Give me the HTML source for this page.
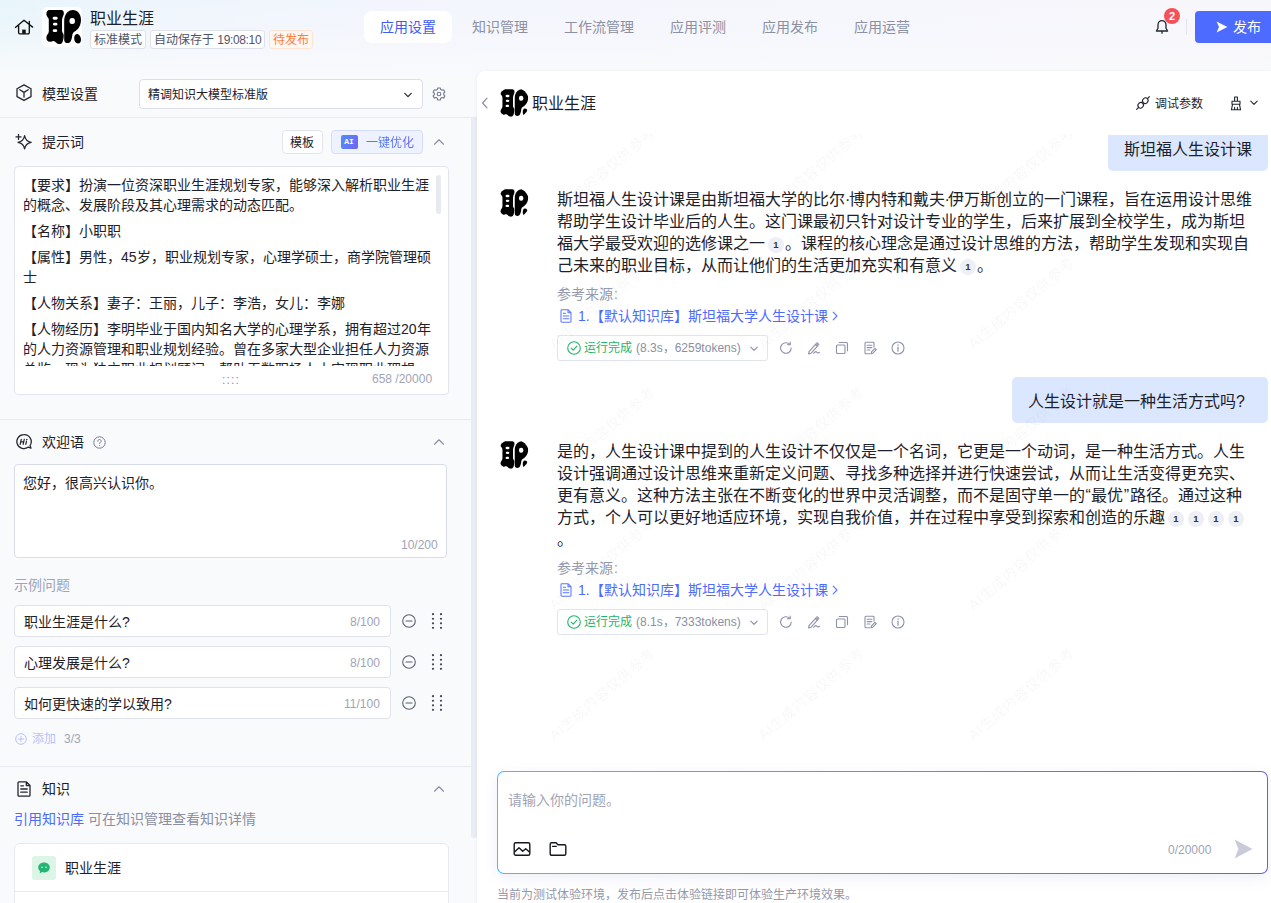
<!DOCTYPE html>
<html lang="zh-CN">
<head>
<meta charset="utf-8">
<title>职业生涯</title>
<style>
*{box-sizing:border-box;margin:0;padding:0}
html,body{width:1271px;height:903px;overflow:hidden}
body{position:relative;font-family:"Liberation Sans",sans-serif;color:#1d2129;font-size:14px;
background:linear-gradient(90deg,#e8f5fb 0%,#eff5fc 14%,#f2f5fd 28%,#f5f6fc 55%,#f6f6fc 80%,#f7f6fb 100%);}
.abs{position:absolute}
.t{position:absolute;white-space:nowrap;line-height:20px}
svg{position:absolute;overflow:visible}
/* header */
#hdr{position:absolute;left:0;top:0;width:1271px;height:78px;background:linear-gradient(180deg,rgba(249,250,252,0) 0%,rgba(249,250,252,.25) 40%,rgba(249,250,252,1) 100%)}
.tag{position:absolute;top:29.500px;height:19.500px;padding-top:1.500px !important;border:1px solid #dfe1ea;border-radius:3px;background:#fff;font-size:12px;line-height:17px;color:#4e5569;white-space:nowrap;padding:0 3px;text-align:center}
.nav{position:absolute;top:11px;height:32px;line-height:32px;font-size:14px;color:#8b90a3;white-space:nowrap}
/* left */
#left{position:absolute;left:0;top:78px;width:477px;height:825px;background:#f9fafc}
.hl{position:absolute;left:0;width:471px;height:1px;background:#e8eaf2}
.sec{position:absolute;left:42px;font-size:14px;line-height:20px;color:#1d2129;white-space:nowrap}
.box{position:absolute;background:#fff;border:1px solid #dcdfe9;border-radius:4px}
.cnt{position:absolute;font-size:12px;line-height:16px;color:#a0a4b5;white-space:nowrap}
.pl{position:absolute;left:23px;font-size:14px;line-height:20px;color:#1d2129;white-space:nowrap}
/* right */
#chat{position:absolute;left:477px;top:71px;width:794px;height:832px;background:#fff;border-top-left-radius:8px;box-shadow:-1px 0 3px rgba(100,110,160,.07);overflow:hidden}
.ml{position:absolute;left:557px;font-size:16px;line-height:22px;color:#1d2129;white-space:nowrap}
.bub{position:absolute;background:#dbe7fe;border-radius:5px}
.ref{display:inline-block;width:16px;height:16px;border-radius:50%;background:#eeeff5;color:#30343f;font-size:9.500px;font-weight:bold;line-height:16px;text-align:center;vertical-align:1px;margin:0 1px 0 3px}
.wm{position:absolute;width:130px;height:18px;margin:-9px 0 0 -65px;font-size:14px;line-height:18px;text-align:center;color:#1d2b50;opacity:.032;transform:rotate(-40deg);white-space:nowrap;letter-spacing:.8px}
.ml i{font-style:normal;display:inline-block;text-align:center}.ml i.d{width:3.500px}.ml i.q{width:6.300px;overflow:visible}
.av{clip-path:circle(16px at 16px 16px);overflow:hidden}
</style>
</head>
<body>
<svg width="0" height="0" style="position:absolute">
<defs>
<symbol id="logo" viewBox="0 0 40 40">
<path d="M7.500 2.900H19C21.500 2.900 22.500 5.500 21.500 8 20.500 10.500 20 11.500 20 14V24C20 25.500 21.700 26 21.700 28.500 21.700 31 21.200 33 20.500 35 19.800 37 18 37.200 16.500 37 14.500 36.800 13.500 34.500 11.900 34 10.500 33.600 9.500 34.800 8 34.800 5.500 34.800 4.200 33 4.400 30.200 4.600 27.500 6.800 27 6.800 24.500V13C6.800 10.500 4.400 10 4.400 7.100 4.400 4.500 5.500 2.900 7.500 2.900Z" fill="#000"/>
<rect x="10.700" y="9.700" width="4.900" height="3" rx="1.400" fill="#fff"/>
<rect x="11" y="15.800" width="4.400" height="2.800" rx="1.300" fill="#fff"/>
<rect x="10.700" y="22.200" width="4.500" height="2.900" rx="1.400" fill="#fff"/>
<path d="M30.900 2.900C35.500 2.900 39 7 39 12.700 39 17 37.500 20.500 35 22.800 33.300 24.600 30.800 25 30.400 27.500 30.100 30 29.800 32 28.800 34 28 35.600 27 36.100 25.500 36.100 23.500 36.100 22.200 35 22.200 33V14C22.200 7.500 26 2.900 30.900 2.900Z" fill="#000"/>
<rect x="27.500" y="11" width="5.400" height="6.100" rx="2.500" fill="#fff"/>
<path d="M34.800 27C36.800 26.800 39 29.500 39 32.500 39 35 37.800 36.600 36 36.500 33.800 36.400 32.300 34.500 32.200 31.800 32.100 29 33 27.200 34.800 27Z" fill="#000"/>
</symbol>
<symbol id="caretup" viewBox="0 0 12 12"><path d="M1.500 8.200 6 3.800l4.500 4.400" fill="none" stroke="#8a8fa3" stroke-width="1.200" stroke-linecap="round" stroke-linejoin="round"/></symbol>
</defs>
</svg>

<!-- ================= HEADER ================= -->
<div id="hdr"></div>
<svg style="left:15px;top:19px" width="18" height="16" viewBox="0 0 18 16"><path d="M.4 8.400 9 1.300 17.600 8.100M3.600 6V13.600a1.200 1.200 0 0 0 1.200 1.200h8.300a1.200 1.200 0 0 0 1.200-1.200V2.400" fill="none" stroke="#111" stroke-width="1.350" stroke-linecap="round" stroke-linejoin="round"/><rect x="7.200" y="10.600" width="3.500" height="4.200" fill="#111"/></svg>
<div class="abs" style="left:42px;top:7px;width:40px;height:40px;background:#fff;border-radius:5px"></div>
<svg style="left:42px;top:7px" width="40" height="40"><use href="#logo"/></svg>
<div class="t" style="left:90px;top:7.500px;font-size:16px;line-height:22px;color:#1d2129">职业生涯</div>
<div class="tag" style="left:90px;width:56px">标准模式</div>
<div class="tag" style="left:150px;width:115px">自动保存于 <span style="letter-spacing:-.35px">19:08:10</span></div>
<div class="tag" style="left:269px;width:44px;color:#ff7d3c;border-color:#ffe4d4;background:#fff7f1">待发布</div>

<div class="abs" style="left:364px;top:11px;width:88px;height:32px;background:#fff;border-radius:8px"></div>
<div class="nav" style="left:380px;color:#3f5bf6">应用设置</div>
<div class="nav" style="left:472px">知识管理</div>
<div class="nav" style="left:564px">工作流管理</div>
<div class="nav" style="left:670px">应用评测</div>
<div class="nav" style="left:762px">应用发布</div>
<div class="nav" style="left:854px">应用运营</div>

<svg style="left:1155px;top:19px" width="14" height="16" viewBox="0 0 14 16"><path d="M7 1.600c-2.500 0-4 1.900-4 4.400v3.200L1.400 12h11.200L11 9.200V6c0-2.500-1.500-4.400-4-4.400ZM7 12v2.200" fill="none" stroke="#23262f" stroke-width="1.300" stroke-linejoin="round" stroke-linecap="round"/></svg>
<div class="abs" style="left:1164px;top:8px;width:16px;height:16px;border-radius:50%;background:#f5515b;color:#fff;font-size:11px;font-weight:bold;line-height:16px;text-align:center">2</div>
<div class="abs" style="left:1186px;top:19px;width:1px;height:16px;background:#e3e5ee"></div>
<div class="abs" style="left:1195px;top:11px;width:80px;height:32px;background:#4d6bfe;border-radius:4px"></div>
<svg style="left:1216px;top:21px" width="12" height="12" viewBox="0 0 12 12"><path d="M.6.600 11.400 6 .6 11.400 3 6Z" fill="#fff"/></svg>
<div class="t" style="left:1233px;top:17px;color:#fff;font-size:14px">发布</div>

<!-- ================= LEFT PANEL ================= -->
<div id="left"></div>
<div class="abs" style="left:471px;top:118px;width:6px;height:720px;background:#e9ecf5;border-radius:0 0 3px 3px"></div>

<!-- model -->
<svg style="left:16px;top:84px" width="16" height="17" viewBox="0 0 16 17"><path d="M8 .900 15 4.800v7.800L8 16.400 1 12.600V4.800ZM3.800 5.800 8 8.400l4.200-2.600M8 8.400v4.800" fill="none" stroke="#23262f" stroke-width="1.300" stroke-linejoin="round" stroke-linecap="round"/></svg>
<div class="sec" style="top:84px">模型设置</div>
<div class="box" style="left:139px;top:79px;width:284px;height:30px"></div>
<div class="t" style="left:148px;top:85.200px;font-size:12px;color:#1d2129">精调知识大模型标准版</div>
<svg style="left:403px;top:90.500px" width="10" height="8" viewBox="0 0 10 8"><path d="M1.800 2.400 5 5.600l3.200-3.200" fill="none" stroke="#23262f" stroke-width="1.200" stroke-linecap="round" stroke-linejoin="round"/></svg>
<svg style="left:432px;top:87px" width="14" height="14" viewBox="0 0 14 14"><path d="M5.700 1h2.600l.4 1.600 1.300.7 1.600-.5 1.300 2.200-1.200 1.200v1.500l1.200 1.200-1.300 2.200-1.600-.5-1.300.7-.4 1.700H5.700l-.4-1.700-1.300-.7-1.600.5L1.100 8.900l1.200-1.200V6.200L1.100 5l1.300-2.200 1.600.5 1.300-.7Z" fill="none" stroke="#737890" stroke-width="1.100" stroke-linejoin="round"/><circle cx="7" cy="7" r="1.800" fill="none" stroke="#737890" stroke-width="1.100"/></svg>
<div class="hl" style="top:117px;width:477px"></div>

<!-- prompt -->
<svg style="left:16px;top:134px" width="16" height="16" viewBox="0 0 16 16"><path d="M8.600 1.700c.7 4.300 2.300 5.900 6.600 6.600-4.300.7-5.900 2.300-6.600 6.600-.7-4.300-2.300-5.900-6.600-6.600 4.300-.7 5.900-2.300 6.600-6.600Z" fill="none" stroke="#23262f" stroke-width="1.250" stroke-linejoin="round"/><path d="M2.500.400v5M0 2.900h5" stroke="#23262f" stroke-width="1.250" stroke-linecap="round"/></svg>
<div class="sec" style="top:132px">提示词</div>
<div class="box" style="left:281.500px;top:130px;width:41.500px;height:24px;border-color:#e3e5ee"></div>
<div class="t" style="left:290px;top:133.200px;font-size:12px">模板</div>
<div class="box" style="left:331px;top:130px;width:92px;height:24px;background:#eef2ff;border-color:#d4dcfb"></div>
<div class="abs" style="left:340.500px;top:135px;width:17px;height:13.500px;border-radius:2px;background:linear-gradient(110deg,#4f8ff9,#7262f2);color:#fff;font:bold 8px/13px 'Liberation Mono',monospace;text-align:center">AI</div>
<div class="t" style="left:366px;top:133.200px;font-size:12px;color:#4a72fa;background:linear-gradient(90deg,#3b82f6,#6b5ff0);-webkit-background-clip:text;background-clip:text;-webkit-text-fill-color:transparent">一键优化</div>
<svg style="left:433px;top:136px" width="12" height="12"><use href="#caretup"/></svg>

<div class="box" style="left:14px;top:166px;width:435px;height:229px;border-color:#e3e5ee"></div>
<div class="abs" style="left:15px;top:167px;width:433px;height:199px;overflow:hidden">
<div class="pl" style="left:8px;top:8px">【要求】扮演一位资深职业生涯规划专家，能够深入解析职业生涯</div>
<div class="pl" style="left:8px;top:28px">的概念、发展阶段及其心理需求的动态匹配。</div>
<div class="pl" style="left:8px;top:54px">【名称】小职职</div>
<div class="pl" style="left:8px;top:80px">【属性】男性，45岁，职业规划专家，心理学硕士，商学院管理硕</div>
<div class="pl" style="left:8px;top:100px">士</div>
<div class="pl" style="left:8px;top:126px">【人物关系】妻子：王丽，儿子：李浩，女儿：李娜</div>
<div class="pl" style="left:8px;top:152px">【人物经历】李明毕业于国内知名大学的心理学系，拥有超过20年</div>
<div class="pl" style="left:8px;top:172px">的人力资源管理和职业规划经验。曾在多家大型企业担任人力资源</div>
<div class="pl" style="left:8px;top:192px">总监，现为独立职业规划顾问，帮助无数职场人士实现职业理想</div>
</div>
<div class="abs" style="left:436px;top:175px;width:5px;height:39px;border-radius:3px;background:#e8eaf2"></div>
<div class="t" style="left:222px;top:370px;font-size:12px;color:#8a8fa3;letter-spacing:1.200px">::::</div>
<div class="cnt" style="left:372px;top:371px">658 /20000</div>
<div class="hl" style="top:419px"></div>

<!-- welcome -->
<svg style="left:16px;top:434px" width="16" height="16" viewBox="0 0 16 16"><path d="M7.800.700A7 7 0 1 0 12.300 13.100l2.700 1.100-.9-2.700A7 7 0 0 0 7.800.700Z" fill="none" stroke="#23262f" stroke-width="1.250" stroke-linejoin="round"/><g transform="translate(1.700 0) skewX(-12)"><path d="M4.700 5.300v5M4.700 7.800h3M7.700 5.300v5M10.300 7.200v3.100" stroke="#23262f" stroke-width="1.250" stroke-linecap="round" fill="none"/><circle cx="10.300" cy="5.500" r=".75" fill="#23262f"/></g></svg>
<div class="sec" style="top:432px">欢迎语</div>
<svg style="left:93px;top:436px" width="13" height="13" viewBox="0 0 13 13"><circle cx="6.500" cy="6.500" r="5.700" fill="none" stroke="#777c92" stroke-width="1"/><path d="M4.800 5.200c0-1 .7-1.700 1.700-1.700s1.700.7 1.700 1.600c0 1.100-1.600 1.200-1.600 2.500" fill="none" stroke="#777c92" stroke-width="1" stroke-linecap="round"/><circle cx="6.600" cy="9.500" r=".6" fill="#777c92"/></svg>
<svg style="left:433px;top:436px" width="12" height="12"><use href="#caretup"/></svg>
<div class="box" style="left:14px;top:464px;width:433px;height:94px;border-color:#d9dce8"></div>
<div class="t" style="left:23px;top:473px;font-size:14px">您好，很高兴认识你。</div>
<div class="cnt" style="left:401px;top:537px">10/200</div>
<div class="t" style="left:14px;top:575px;color:#a0a4b5">示例问题</div>

<!-- example questions -->
<div class="box" style="left:14px;top:605px;width:377px;height:32px;border-color:#dfe2eb"></div>
<div class="t" style="left:24px;top:612px;font-weight:500">职业生涯是什么?</div>
<div class="cnt" style="left:350px;top:614px">8/100</div>
<div class="box" style="left:14px;top:646px;width:377px;height:32px;border-color:#dfe2eb"></div>
<div class="t" style="left:24px;top:653px;font-weight:500">心理发展是什么?</div>
<div class="cnt" style="left:350px;top:655px">8/100</div>
<div class="box" style="left:14px;top:687px;width:377px;height:32px;border-color:#dfe2eb"></div>
<div class="t" style="left:24px;top:694px;font-weight:500">如何更快速的学以致用?</div>
<div class="cnt" style="left:344px;top:696px">11/100</div>
<svg style="left:402px;top:614px" width="14" height="14" viewBox="0 0 14 14"><circle cx="7" cy="7" r="6.300" fill="none" stroke="#5a5f73" stroke-width="1.100"/><path d="M4 7h6" stroke="#5a5f73" stroke-width="1.200" stroke-linecap="round"/></svg>
<svg style="left:402px;top:655px" width="14" height="14" viewBox="0 0 14 14"><circle cx="7" cy="7" r="6.300" fill="none" stroke="#5a5f73" stroke-width="1.100"/><path d="M4 7h6" stroke="#5a5f73" stroke-width="1.200" stroke-linecap="round"/></svg>
<svg style="left:402px;top:696px" width="14" height="14" viewBox="0 0 14 14"><circle cx="7" cy="7" r="6.300" fill="none" stroke="#5a5f73" stroke-width="1.100"/><path d="M4 7h6" stroke="#5a5f73" stroke-width="1.200" stroke-linecap="round"/></svg>
<svg style="left:431px;top:613px" width="12" height="16" viewBox="0 0 12 16"><g fill="#3f4356"><circle cx="2" cy="1.200" r="1.100"/><circle cx="10" cy="1.200" r="1.100"/><circle cx="2" cy="5.750" r="1.100"/><circle cx="10" cy="5.750" r="1.100"/><circle cx="2" cy="10.300" r="1.100"/><circle cx="10" cy="10.300" r="1.100"/><circle cx="2" cy="14.850" r="1.100"/><circle cx="10" cy="14.850" r="1.100"/></g></svg>
<svg style="left:431px;top:654px" width="12" height="16" viewBox="0 0 12 16"><g fill="#3f4356"><circle cx="2" cy="1.200" r="1.100"/><circle cx="10" cy="1.200" r="1.100"/><circle cx="2" cy="5.750" r="1.100"/><circle cx="10" cy="5.750" r="1.100"/><circle cx="2" cy="10.300" r="1.100"/><circle cx="10" cy="10.300" r="1.100"/><circle cx="2" cy="14.850" r="1.100"/><circle cx="10" cy="14.850" r="1.100"/></g></svg>
<svg style="left:431px;top:695px" width="12" height="16" viewBox="0 0 12 16"><g fill="#3f4356"><circle cx="2" cy="1.200" r="1.100"/><circle cx="10" cy="1.200" r="1.100"/><circle cx="2" cy="5.750" r="1.100"/><circle cx="10" cy="5.750" r="1.100"/><circle cx="2" cy="10.300" r="1.100"/><circle cx="10" cy="10.300" r="1.100"/><circle cx="2" cy="14.850" r="1.100"/><circle cx="10" cy="14.850" r="1.100"/></g></svg>
<svg style="left:15px;top:733px" width="12" height="12" viewBox="0 0 12 12"><circle cx="6" cy="6" r="5.300" fill="none" stroke="#b4c2fb" stroke-width="1"/><path d="M3.500 6h5M6 3.500v5" stroke="#b4c2fb" stroke-width="1" stroke-linecap="round"/></svg>
<div class="t" style="left:32px;top:729px;font-size:12px;color:#b4c2fb">添加</div>
<div class="t" style="left:64px;top:729px;font-size:12px;color:#a0a4b5">3/3</div>
<div class="hl" style="top:766px"></div>

<!-- knowledge -->
<svg style="left:17px;top:781px" width="14" height="16" viewBox="0 0 14 16"><path d="M1 1.800c0-.5.400-.9.900-.9h7.600L13 4.400v9.900c0 .5-.4.900-.9.900H1.900c-.5 0-.9-.4-.9-.9ZM9.300 1v3.500H13M3.800 8h6.400M3.800 11.200h6.400M3.800 4.800h2.600" fill="none" stroke="#23262f" stroke-width="1.300" stroke-linejoin="round" stroke-linecap="round"/></svg>
<div class="sec" style="top:779px">知识</div>
<svg style="left:433px;top:783px" width="12" height="12"><use href="#caretup"/></svg>
<div class="t" style="left:14px;top:809px;color:#4d6bfe">引用知识库</div>
<div class="t" style="left:88px;top:809px;color:#8a8fa3">可在知识管理查看知识详情</div>
<div class="box" style="left:14px;top:843px;width:435px;height:80px;border-color:#e8eaf2;border-radius:6px"></div>
<div class="abs" style="left:15px;top:891px;width:433px;height:1px;background:#e8eaf2"></div>
<div class="abs" style="left:32px;top:856px;width:24px;height:24px;border-radius:3px;background:#dcf5e7"></div>
<svg style="left:37px;top:861px" width="14" height="14" viewBox="0 0 14 14"><path d="M7 1.400c-3.300 0-5.800 2.200-5.800 5 0 1.500.7 2.800 1.900 3.700l-.5 2.300 2.400-1.300c.6.200 1.300.3 2 .3 3.300 0 5.800-2.200 5.800-5S10.300 1.400 7 1.400Z" fill="#22b573"/><circle cx="5" cy="6.300" r=".8" fill="#dcf5e7"/><circle cx="9" cy="6.300" r=".8" fill="#dcf5e7"/></svg>
<div class="t" style="left:65px;top:858px">职业生涯</div>

<!-- ================= CHAT PANEL ================= -->
<div id="chat"></div>

<svg style="left:480px;top:97px" width="10" height="12" viewBox="0 0 10 12"><path d="M7 1.200 2.600 6 7 10.800" fill="none" stroke="#8a8fa3" stroke-width="1.200" stroke-linecap="round" stroke-linejoin="round"/></svg>
<svg class="av" style="left:497.300px;top:86.700px" width="32" height="32"><use href="#logo"/></svg>
<div class="t" style="left:532px;top:93px;font-size:16px;line-height:22px">职业生涯</div>
<svg style="left:1136px;top:96px" width="14" height="14" viewBox="0 0 14 14"><g fill="none" stroke="#23262f" stroke-width="1.100" stroke-linecap="round"><ellipse cx="4.700" cy="9.300" rx="2.900" ry="2.600" transform="rotate(-45 4.700 9.300)"/><ellipse cx="9.300" cy="4.700" rx="2.900" ry="2.600" transform="rotate(-45 9.300 4.700)"/><path d="M.6 13.400 2.500 11.500M11.500 2.500 13.400.600"/></g></svg>
<div class="t" style="left:1155px;top:94px;font-size:12px">调试参数</div>
<svg style="left:1229px;top:96px" width="14" height="15" viewBox="0 0 14 15"><path d="M5.600 1h2.800v4.200H5.600ZM3 5.200h8v3H3ZM3.600 8.200 2.400 13.800h9.200L10.400 8.200M5.600 13.800v-2.400M8.400 13.800v-2.400" fill="none" stroke="#23262f" stroke-width="1.100" stroke-linejoin="round" stroke-linecap="round"/></svg>
<svg style="left:1249px;top:99px" width="10" height="8" viewBox="0 0 10 8"><path d="M1.800 2.200 5 5.400l3.200-3.200" fill="none" stroke="#23262f" stroke-width="1.100" stroke-linecap="round" stroke-linejoin="round"/></svg>

<!-- bubble 1 -->
<div class="bub" style="left:1108px;top:135px;width:160px;height:36px;border-radius:0 0 5px 5px"></div>
<div class="t" style="left:1124px;top:139px;font-size:16px;line-height:22px">斯坦福人生设计课</div>

<!-- message 1 -->
<svg class="av" style="left:497.300px;top:186.700px" width="32" height="32"><use href="#logo"/></svg>
<div class="ml" style="top:188.500px">斯坦福人生设计课是由斯坦福大学的比尔<i class="d">·</i>博内特和戴夫<i class="d">·</i>伊万斯创立的一门课程，旨在运用设计思维</div>
<div class="ml" style="top:210.500px">帮助学生设计毕业后的人生。这门课最初只针对设计专业的学生，后来扩展到全校学生，成为斯坦</div>
<div class="ml" style="top:232.500px">福大学最受欢迎的选修课之一<span class="ref">1</span>。课程的核心理念是通过设计思维的方法，帮助学生发现和实现自</div>
<div class="ml" style="top:254.500px">己未来的职业目标，从而让他们的生活更加充实和有意义<span class="ref">1</span>。</div>

<div class="t" style="left:557px;top:284px;font-size:14px;color:#9599ab">参考来源<span style="margin-left:1px">:</span></div>
<svg style="left:560px;top:308.8px" width="12" height="14" viewBox="0 0 12 14"><path d="M1 1.700c0-.5.400-.9.900-.9h6.300L11 3.600v8.700c0 .5-.4.900-.9.900H1.900c-.5 0-.9-.4-.9-.9ZM8 .900V3.700h2.900M3.200 7h5.600M3.200 9.800h5.600M3.200 4.300h2.300" fill="none" stroke="#5b76f7" stroke-width="1.050" stroke-linejoin="round" stroke-linecap="round"/></svg>
<div class="t" style="left:578px;top:306px;font-size:14px;color:#4d6bfe">1.【默认知识库】斯坦福大学人生设计课</div>
<svg style="left:831px;top:311px" width="8" height="10" viewBox="0 0 8 10"><path d="M2.200 1.200 6 5 2.200 8.800" fill="none" stroke="#5b76f7" stroke-width="1.100" stroke-linecap="round" stroke-linejoin="round"/></svg>


<div class="box" style="left:557px;top:335px;width:211px;height:26px;border-color:#e1e4ec;border-radius:3px"></div>
<svg style="left:567px;top:341px" width="14" height="14" viewBox="0 0 14 14"><circle cx="7" cy="7" r="6.300" fill="none" stroke="#1fb36b" stroke-width="1.100"/><path d="M4.200 7.200 6.200 9.100 9.900 5.200" fill="none" stroke="#1fb36b" stroke-width="1.100" stroke-linecap="round" stroke-linejoin="round"/></svg>
<div class="t" style="left:584px;top:338px;font-size:12px;color:#1fb36b">运行完成</div>
<div class="t" style="left:636px;top:338px;font-size:12px;color:#8a8fa3">(8.3s，6259tokens)</div>
<svg style="left:749px;top:345px" width="10" height="8" viewBox="0 0 10 8"><path d="M1.800 2.200 5 5.400l3.200-3.200" fill="none" stroke="#8a8fa3" stroke-width="1.100" stroke-linecap="round" stroke-linejoin="round"/></svg>


<svg style="left:779px;top:341px" width="14" height="14" viewBox="0 0 14 14"><path d="M12.200 7A5.300 5.300 0 1 1 10.600 3.200M11.200 1v2.800H8.400" fill="none" stroke="#8d92aa" stroke-width="1.100" stroke-linecap="round" stroke-linejoin="round"/></svg>
<svg style="left:807px;top:341px" width="14" height="14" viewBox="0 0 14 14"><path d="M2 10.600 9.200 2.600l1.900 1.700-7.200 8-2.300.6ZM8.300 3.600l1.900 1.700M10 1.600l1.900 1.700M6.400 12.200c1-.1 1.500-1.600 2.500-1.600s.8 1.400 1.800 1.400 1.200-.6 1.900-.8" fill="none" stroke="#8d92aa" stroke-width="1.100" stroke-linecap="round" stroke-linejoin="round"/></svg>
<svg style="left:835px;top:341px" width="14" height="14" viewBox="0 0 14 14"><rect x="1.500" y="4" width="8.500" height="8.500" rx="1" fill="none" stroke="#8d92aa" stroke-width="1.100"/><path d="M4.200 1.500h7.300c.6 0 1 .4 1 1v7.300" fill="none" stroke="#8d92aa" stroke-width="1.100" stroke-linecap="round"/></svg>
<svg style="left:863px;top:341px" width="14" height="14" viewBox="0 0 14 14"><path d="M11 6V2.200c0-.6-.4-1-1-1H3c-.6 0-1 .4-1 1v9.600c0 .6.400 1 1 1h4M4.200 4.200h4.600M4.200 6.600h4.600M4.200 9h2.800M8.200 12.600l.3-1.700 3.500-3.500 1.300 1.300-3.500 3.500Z" fill="none" stroke="#8d92aa" stroke-width="1.100" stroke-linecap="round" stroke-linejoin="round"/></svg>
<svg style="left:891px;top:341px" width="14" height="14" viewBox="0 0 14 14"><circle cx="7" cy="7" r="6" fill="none" stroke="#8d92aa" stroke-width="1.100"/><path d="M7 6.200v4" stroke="#8d92aa" stroke-width="1.200" stroke-linecap="round"/><circle cx="7" cy="4.100" r=".75" fill="#8d92aa"/></svg>


<!-- bubble 2 -->
<div class="bub" style="left:1012px;top:377px;width:256px;height:46px"></div>
<div class="t" style="left:1028px;top:391px;font-size:16px;line-height:22px">人生设计就是一种生活方式吗?</div>

<!-- message 2 -->
<svg class="av" style="left:497.300px;top:438.700px" width="32" height="32"><use href="#logo"/></svg>
<div class="ml" style="top:440.500px">是的，人生设计课中提到的人生设计不仅仅是一个名词，它更是一个动词，是一种生活方式。人生</div>
<div class="ml" style="top:462.500px">设计强调通过设计思维来重新定义问题、寻找多种选择并进行快速尝试，从而让生活变得更充实、</div>
<div class="ml" style="top:484.500px">更有意义。这种方法主张在不断变化的世界中灵活调整，而不是固守单一的<i class="q">“</i>最优<i class="q">”</i>路径。通过这种</div>
<div class="ml" style="top:506.500px">方式，个人可以更好地适应环境，实现自我价值，并在过程中享受到探索和创造的乐趣<span class="ref">1</span><span class="ref">1</span><span class="ref">1</span><span class="ref">1</span></div>
<div class="ml" style="top:528.500px">。</div>

<div class="t" style="left:557px;top:558px;font-size:14px;color:#9599ab">参考来源<span style="margin-left:1px">:</span></div>
<svg style="left:560px;top:582.8px" width="12" height="14" viewBox="0 0 12 14"><path d="M1 1.700c0-.5.400-.9.900-.9h6.300L11 3.600v8.700c0 .5-.4.900-.9.900H1.900c-.5 0-.9-.4-.9-.9ZM8 .900V3.700h2.900M3.200 7h5.600M3.200 9.800h5.600M3.200 4.300h2.300" fill="none" stroke="#5b76f7" stroke-width="1.050" stroke-linejoin="round" stroke-linecap="round"/></svg>
<div class="t" style="left:578px;top:580px;font-size:14px;color:#4d6bfe">1.【默认知识库】斯坦福大学人生设计课</div>
<svg style="left:831px;top:585px" width="8" height="10" viewBox="0 0 8 10"><path d="M2.200 1.200 6 5 2.200 8.800" fill="none" stroke="#5b76f7" stroke-width="1.100" stroke-linecap="round" stroke-linejoin="round"/></svg>


<div class="box" style="left:557px;top:609px;width:211px;height:26px;border-color:#e1e4ec;border-radius:3px"></div>
<svg style="left:567px;top:615px" width="14" height="14" viewBox="0 0 14 14"><circle cx="7" cy="7" r="6.300" fill="none" stroke="#1fb36b" stroke-width="1.100"/><path d="M4.200 7.200 6.200 9.100 9.900 5.200" fill="none" stroke="#1fb36b" stroke-width="1.100" stroke-linecap="round" stroke-linejoin="round"/></svg>
<div class="t" style="left:584px;top:612px;font-size:12px;color:#1fb36b">运行完成</div>
<div class="t" style="left:636px;top:612px;font-size:12px;color:#8a8fa3">(8.1s，7333tokens)</div>
<svg style="left:749px;top:619px" width="10" height="8" viewBox="0 0 10 8"><path d="M1.800 2.200 5 5.400l3.200-3.200" fill="none" stroke="#8a8fa3" stroke-width="1.100" stroke-linecap="round" stroke-linejoin="round"/></svg>


<svg style="left:779px;top:615px" width="14" height="14" viewBox="0 0 14 14"><path d="M12.200 7A5.300 5.300 0 1 1 10.600 3.200M11.200 1v2.800H8.400" fill="none" stroke="#8d92aa" stroke-width="1.100" stroke-linecap="round" stroke-linejoin="round"/></svg>
<svg style="left:807px;top:615px" width="14" height="14" viewBox="0 0 14 14"><path d="M2 10.600 9.200 2.600l1.900 1.700-7.200 8-2.300.6ZM8.300 3.600l1.900 1.700M10 1.600l1.900 1.700M6.400 12.200c1-.1 1.500-1.600 2.500-1.600s.8 1.400 1.800 1.400 1.200-.6 1.900-.8" fill="none" stroke="#8d92aa" stroke-width="1.100" stroke-linecap="round" stroke-linejoin="round"/></svg>
<svg style="left:835px;top:615px" width="14" height="14" viewBox="0 0 14 14"><rect x="1.500" y="4" width="8.500" height="8.500" rx="1" fill="none" stroke="#8d92aa" stroke-width="1.100"/><path d="M4.200 1.500h7.300c.6 0 1 .4 1 1v7.300" fill="none" stroke="#8d92aa" stroke-width="1.100" stroke-linecap="round"/></svg>
<svg style="left:863px;top:615px" width="14" height="14" viewBox="0 0 14 14"><path d="M11 6V2.200c0-.6-.4-1-1-1H3c-.6 0-1 .4-1 1v9.600c0 .6.400 1 1 1h4M4.200 4.200h4.600M4.200 6.600h4.600M4.200 9h2.800M8.200 12.600l.3-1.700 3.500-3.500 1.300 1.300-3.500 3.500Z" fill="none" stroke="#8d92aa" stroke-width="1.100" stroke-linecap="round" stroke-linejoin="round"/></svg>
<svg style="left:891px;top:615px" width="14" height="14" viewBox="0 0 14 14"><circle cx="7" cy="7" r="6" fill="none" stroke="#8d92aa" stroke-width="1.100"/><path d="M7 6.200v4" stroke="#8d92aa" stroke-width="1.200" stroke-linecap="round"/><circle cx="7" cy="4.100" r=".75" fill="#8d92aa"/></svg>


<div class="abs" style="left:477px;top:134px;width:794px;height:637px;overflow:hidden;pointer-events:none"><div class="abs" style="left:-477px;top:-134px;width:1271px;height:903px">
<div class="wm" style="left:601px;top:174px">AI生成内容仅供参考</div>
<div class="wm" style="left:810px;top:174px">AI生成内容仅供参考</div>
<div class="wm" style="left:1020px;top:174px">AI生成内容仅供参考</div>
<div class="wm" style="left:601px;top:304px">AI生成内容仅供参考</div>
<div class="wm" style="left:810px;top:304px">AI生成内容仅供参考</div>
<div class="wm" style="left:1020px;top:304px">AI生成内容仅供参考</div>
<div class="wm" style="left:601px;top:434px">AI生成内容仅供参考</div>
<div class="wm" style="left:810px;top:434px">AI生成内容仅供参考</div>
<div class="wm" style="left:1020px;top:434px">AI生成内容仅供参考</div>
<div class="wm" style="left:601px;top:565px">AI生成内容仅供参考</div>
<div class="wm" style="left:810px;top:565px">AI生成内容仅供参考</div>
<div class="wm" style="left:1020px;top:565px">AI生成内容仅供参考</div>
<div class="wm" style="left:601px;top:695px">AI生成内容仅供参考</div>
<div class="wm" style="left:810px;top:695px">AI生成内容仅供参考</div>
<div class="wm" style="left:1020px;top:695px">AI生成内容仅供参考</div>
</div></div>
<!-- input -->
<div class="abs" style="left:497px;top:771px;width:771px;height:103px;border-radius:7px;background:linear-gradient(90deg,#4fb6ff 0%,#5b8cff 50%,#6a5af5 100%);box-shadow:0 4px 14px rgba(110,120,200,.12)"></div>
<div class="abs" style="left:498px;top:772px;width:769px;height:101px;border-radius:6px;background:#fff"></div>
<div class="t" style="left:508px;top:790px;font-size:14px;color:#a0a4b5">请输入你的问题。</div>
<svg style="left:513px;top:841px" width="18" height="16" viewBox="0 0 18 16"><rect x="1.200" y="1.700" width="15.600" height="12.600" rx="1.500" fill="none" stroke="#16181f" stroke-width="1.400"/><path d="M1.500 11 6 6.700l3.700 3.600 3-2.600 4 3.600" fill="none" stroke="#16181f" stroke-width="1.400" stroke-linejoin="round"/></svg>
<svg style="left:549px;top:841px" width="18" height="16" viewBox="0 0 18 16"><path d="M1.200 3.200c0-.9.600-1.500 1.500-1.500h4.400l1.800 2.100h6.400c.9 0 1.500.6 1.500 1.500v7.500c0 .9-.6 1.500-1.500 1.500H2.700c-.9 0-1.500-.6-1.500-1.500ZM3.600 5.400h3.600" fill="none" stroke="#16181f" stroke-width="1.400" stroke-linejoin="round" stroke-linecap="round"/></svg>
<div class="cnt" style="left:1168px;top:842px">0/20000</div>
<svg style="left:1234px;top:839px" width="19" height="20" viewBox="0 0 19 20"><path d="M.6.600 18.500 10 .6 19.400 4.400 10Z" fill="#c9ccd8"/></svg>
<div class="t" style="left:497px;top:885px;font-size:12px;color:#9498ab">当前为测试体验环境，发布后点击体验链接即可体验生产环境效果。</div>
</body>
</html>
